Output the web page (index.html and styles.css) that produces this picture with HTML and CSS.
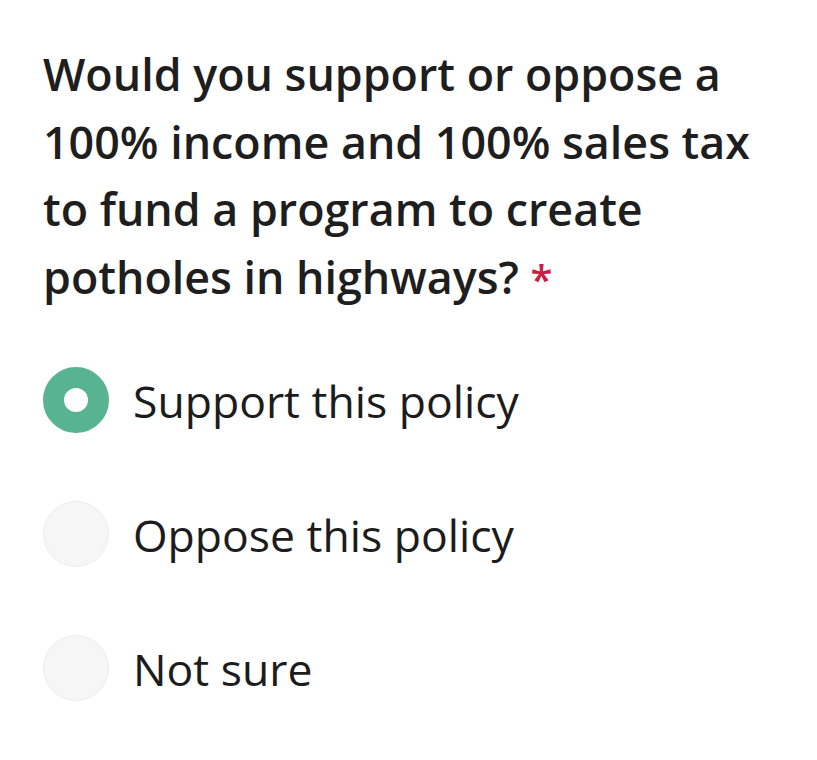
FILE: index.html
```html
<!DOCTYPE html>
<html>
<head>
<meta charset="utf-8">
<link rel="stylesheet" href="styles.css">
</head>
<body>
<div class="question">
  <h1 class="title">Would you support or oppose a 100% income and 100% sales tax to fund a program to create potholes in highways? <span class="req">*</span></h1>
  <div class="options">
    <label class="option"><span class="radio checked"></span><span class="label">Support this policy</span></label>
    <label class="option"><span class="radio"></span><span class="label">Oppose this policy</span></label>
    <label class="option"><span class="radio"></span><span class="label">Not sure</span></label>
  </div>
</div>
</body>
</html>
```
FILE: styles.css
```css
html, body {
  margin: 0;
  padding: 0;
  background: #ffffff;
}
body {
  font-family: "Open Sans", "Noto Sans", sans-serif;
  color: #1c1c1c;
}
.question {
  padding: 40px 40px 0 43px;
}
.title {
  margin: 0;
  font-size: 44.8px;
  font-weight: 600;
  line-height: 67.5px;
  width: 720px;
  color: #1e1e1e;
}
.req {
  color: #c81e45;
  font-size: 40px;
}
.options {
  display: flex;
  flex-direction: column;
  gap: 68px;
  margin-top: 55px;
}
.option {
  display: flex;
  align-items: center;
  gap: 24px;
  height: 66px;
}
.radio {
  width: 66px;
  height: 66px;
  border-radius: 50%;
  box-sizing: border-box;
  background: #f6f6f6;
  border: 1px solid #ececec;
  flex: none;
}
.radio.checked {
  background: #ffffff;
  border: 21px solid #58b393;
}
.label {
  font-size: 44.5px;
  font-weight: 400;
  color: #1c1c1c;
}
```
